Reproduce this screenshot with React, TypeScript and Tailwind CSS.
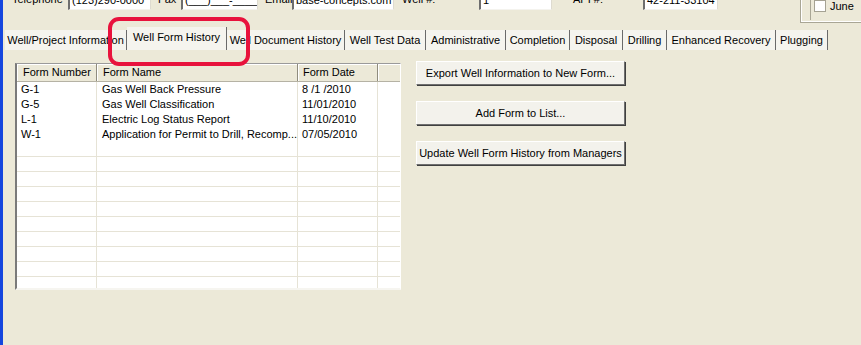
import React from 'react';

const tabs = [
    { label: 'Well/Project Information', w: 'w-[122px]' },
    { label: 'Well Form History', w: 'w-[100px]', active: true },
    { label: 'Well Document History', w: 'w-[118px]' },
    { label: 'Well Test Data', w: 'w-[81px]' },
    { label: 'Administrative', w: 'w-[80px]' },
    { label: 'Completion', w: 'w-[64px]' },
    { label: 'Disposal', w: 'w-[53px]' },
    { label: 'Drilling', w: 'w-[44px]' },
    { label: 'Enhanced Recovery', w: 'w-[109px]' },
    { label: 'Plugging', w: 'w-[52px]' },
];

const forms = [
    { num: 'G-1', name: 'Gas Well Back Pressure', date: '8 /1 /2010' },
    { num: 'G-5', name: 'Gas Well Classification', date: '11/01/2010' },
    { num: 'L-1', name: 'Electric Log Status Report', date: '11/10/2010' },
    { num: 'W-1', name: 'Application for Permit to Drill, Recomp...', date: '07/05/2010' },
];

const EMPTY_ROWS = 10;

const Field: React.FC<{ w: string; value: string }> = ({ w, value }) => (
    <div className={`${w} h-[21px] bg-white border-l-2 border-t-2 border-l-[#6e6e6e] border-t-[#6e6e6e] border-b border-r border-b-[#f4f3ee] border-r-[#dedbd0] flex items-center pl-[2px] overflow-hidden whitespace-nowrap`}>
        {value}
    </div>
);

const XpButton: React.FC<{ label: string }> = ({ label }) => (
    <button className="w-[209px] h-[24px] bg-[#F3F2EC] border border-t-white border-l-white border-r-[#6f6f6f] border-b-[#6f6f6f] shadow-[1px_1px_0_#404040] flex items-center justify-center text-[11px] text-black">
        {label}
    </button>
);

export default function App() {
    return (
        <div
            className="relative w-[861px] h-[345px] overflow-hidden bg-[#ECE9D8] border-l-[3px] border-l-[#1546DE] text-[11px] text-black leading-none"
            style={{ fontFamily: '"Liberation Sans", Arial, sans-serif' }}
        >
            {/* header fields, cut off at top */}
            <div className="flex items-start mt-[-11px] h-[34px]">
                <div className="w-[65px] h-[21px] pl-[9px] flex items-center">Telephone</div>
                <Field w="w-[83px]" value="(123)290-0000" />
                <div className="w-[30px] h-[21px] pl-[7px] flex items-center">Fax</div>
                <Field w="w-[77px]" value="(___)___-____" />
                <div className="w-[34px] h-[21px] pl-[7px] flex items-center">Email:</div>
                <Field w="w-[102px]" value="base-concepts.com" />
                <div className="w-[85px] h-[21px] pl-[8px] flex items-center">Well #:</div>
                <Field w="w-[73px]" value="1" />
                <div className="w-[91px] h-[21px] pl-[21px] flex items-center">API #:</div>
                <Field w="w-[75px]" value="42-211-33104" />
                <div className="ml-[82px] flex-1 h-[34px] border-l border-b border-l-[#a9a695] border-b-[#a9a695] shadow-[inset_1px_-1px_0_#ffffff]">
                    <div className="ml-[9px] h-[31px] border-l border-l-[#a9a695] flex items-end pb-[8px] pl-[3px] gap-[4px]">
                        <div className="w-[12px] h-[12px] bg-white border border-[#a5a293]" />
                        <span>June</span>
                    </div>
                </div>
            </div>

            {/* tab strip */}
            <div className="flex items-end h-[23px] pl-[2px] mt-[4px]">
                {tabs.map((t) => (
                    <div
                        key={t.label}
                        className={`${t.w} ${t.active ? 'h-[23px] pb-[7px]' : 'h-[20px] pb-[4px]'} shrink-0 bg-[#F5F4EE] border-r border-r-[#6a6a6a] flex items-end justify-center whitespace-nowrap overflow-hidden`}
                    >
                        {t.label}
                    </div>
                ))}
            </div>

            {/* tab page */}
            <div className="flex items-start pl-[12px] pt-[13px]">
                <div className="w-[386px] h-[227px] bg-white border-l-2 border-t border-l-[#7a7a7a] border-t-[#9a9a9a] border-r border-b-2 border-r-white border-b-[#f6f5f0] overflow-hidden">
                    <div className="flex h-[18px] bg-[#ECE9D8] border-b border-b-[#b5b2a4]">
                        <div className="w-[80px] pl-[6px] flex items-center border-r border-r-[#8f8c7e] shadow-[inset_1px_1px_0_#ffffff]">Form Number</div>
                        <div className="w-[201px] pl-[6px] flex items-center border-r border-r-[#8f8c7e] shadow-[inset_1px_1px_0_#ffffff]">Form Name</div>
                        <div className="w-[80px] pl-[5px] flex items-center border-r border-r-[#8f8c7e] shadow-[inset_1px_1px_0_#ffffff]">Form Date</div>
                        <div className="flex-1 shadow-[inset_1px_1px_0_#ffffff]" />
                    </div>
                    {forms.map((f) => (
                        <div key={f.num} className="flex h-[15px]">
                            <div className="w-[80px] pl-[4px] flex items-center border-r border-r-[#e6e3d6]">{f.num}</div>
                            <div className="w-[201px] pl-[5px] flex items-center border-r border-r-[#e6e3d6] whitespace-nowrap overflow-hidden">{f.name}</div>
                            <div className="w-[80px] pl-[4px] flex items-center border-r border-r-[#e6e3d6]">{f.date}</div>
                            <div className="flex-1" />
                        </div>
                    ))}
                    {Array.from({ length: EMPTY_ROWS }).map((_, i) => (
                        <div key={i} className="flex h-[15px] border-b border-b-[#e6e3d6]">
                            <div className="w-[80px] border-r border-r-[#e6e3d6]" />
                            <div className="w-[201px] border-r border-r-[#e6e3d6]" />
                            <div className="w-[80px] border-r border-r-[#e6e3d6]" />
                            <div className="flex-1" />
                        </div>
                    ))}
                </div>

                <div className="ml-[15px] mt-[-2px] flex flex-col gap-[16px]">
                    <XpButton label="Export Well Information to New Form..." />
                    <XpButton label="Add Form to List..." />
                    <XpButton label="Update Well Form History from Managers" />
                </div>
            </div>

            {/* red annotation */}
            <div className="absolute left-[105px] top-[17px] w-[142px] h-[49px] border-4 border-[#E8123C] rounded-[11px] pointer-events-none" />
        </div>
    );
}
